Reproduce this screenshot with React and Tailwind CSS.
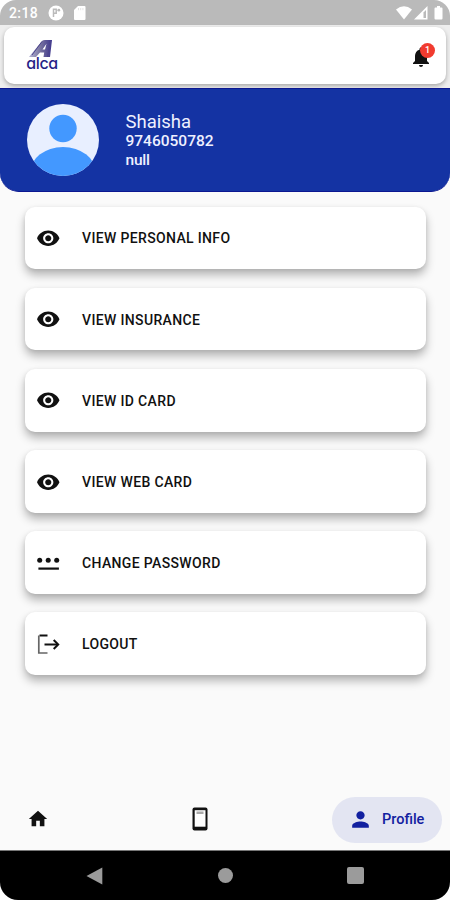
import { MdHome, MdNotifications, MdPerson, MdRemoveRedEye } from "react-icons/md";

function PasswordIcon() {
  return (
    <svg width="24" height="24" viewBox="0 0 24 24" fill="#111">
      <circle cx="2.700" cy="9.200" r="2.500" />
      <circle cx="11.200" cy="9.200" r="2.500" />
      <circle cx="19.700" cy="9.200" r="2.500" />
      <rect x="1.400" y="16.500" width="20.500" height="2.200" />
    </svg>
  );
}

function LogoutIcon() {
  return (
    <svg width="24" height="24" viewBox="0 0 24 24" fill="none" stroke="#111">
      <path d="M10.500 3.500H2.500" strokeWidth="2" />
      <path d="M1.800 3.500V21H10.500" strokeWidth="1.700" stroke="#666" />
      <path d="M7.500 12.500H20.500" strokeWidth="2" />
      <path d="M16.700 8L21.200 12.500L16.700 17" strokeWidth="2" />
    </svg>
  );
}

function Logo() {
  return (
    <div className="w-8 h-[31px] flex flex-col items-center">
      <svg width="26" height="18" viewBox="0 0 26 18" className="shrink-0">
        <defs>
          <linearGradient id="logoFill" x1="0" x2="1">
            <stop offset="0" stopColor="#b5b3d4" />
            <stop offset="0.5" stopColor="#77739f" />
            <stop offset="1" stopColor="#3d358d" />
          </linearGradient>
        </defs>
        <path
          fill="url(#logoFill)"
          fillRule="evenodd"
          d="M0 17L13 1Q14 0 16 0H23L21 17H14.500L15.200 12.500H11L7 17ZM13.500 9.500H16L17.500 3.800Z"
        />
        <path d="M21.500 1L18.500 17M13 1.500L3 15" stroke="#4c458d" strokeWidth="1" fill="none" />
      </svg>
      <span className="-mt-[3px] text-[16px] leading-[17px] font-medium text-[#261f87] font-['Inter',sans-serif] [font-feature-settings:'cv11'] tracking-[-0.4px]">
        alca
      </span>
    </div>
  );
}

function StatusBar() {
  return (
    <div className="h-[25px] shrink-0 bg-[#bababa] rounded-t-[16px] flex items-center justify-between pl-[9px] pr-[7px] text-white">
      <div className="flex items-center">
        <span className="w-[39px] text-[14px] leading-[25px] font-medium tracking-[0.4px] pt-px">2:18</span>
        <svg width="16" height="16" viewBox="0 0 16 16" className="mt-[1px]">
          <circle cx="8" cy="8" r="7.5" fill="#fff" />
          <path d="M5.500 12V4.200H8.200V8.200H5.500" fill="none" stroke="#bababa" strokeWidth="1.500" />
          <circle cx="10.800" cy="5.200" r="1.400" fill="#bababa" />
        </svg>
        <svg width="12" height="14" viewBox="0 0 12 14" className="ml-[10px] mt-[1px]" fill="#fff">
          <path d="M4 0H10.500Q11.500 0 11.500 1V13Q11.500 14 10.500 14H1Q0 14 0 13V4Z" />
          <path d="M4.500 2V4.200M6.700 2V4.200M8.900 2V4.200" stroke="#ddd" strokeWidth="0.800" />
        </svg>
      </div>
      <div className="flex items-center pt-px">
        <svg width="16" height="14" viewBox="0 0 16 14" fill="#fff">
          <path d="M0 3.600Q8-3.200 16 3.600L8 13.500Z" />
        </svg>
        <svg width="14" height="14" viewBox="0 0 14 14" className="ml-[2px]" fill="#fff">
          <path d="M0 13.500L13.500 0V13.500Z" />
          <path d="M9.500 6.500L12 4V12H9.500Z" fill="#bababa" />
        </svg>
        <svg width="9" height="14" viewBox="0 0 9 14" className="ml-[6px]" fill="#fff">
          <path d="M3 0H6V1.500H7.500Q8.500 1.500 8.500 2.500V12.500Q8.500 13.500 7.500 13.500H1.500Q0.500 13.500 0.500 12.500V2.500Q0.500 1.500 1.500 1.500H3Z" />
        </svg>
      </div>
    </div>
  );
}

function Header() {
  return (
    <div className="h-[63px] shrink-0 px-[4px] pt-[2px] pb-[4px] bg-[#eeeeee]">
      <div className="h-[57px] rounded-[10px] bg-white shadow-[0_2px_4px_rgba(0,0,0,0.3)] flex items-center justify-between pl-[22px] pr-[13px]">
        <Logo />
        <div className="relative w-[24px] h-[24px] mt-[2px]">
          <MdNotifications size={24} color="#111" />
          <span className="absolute -top-[2px] left-[11px] w-[15px] h-[15px] rounded-full bg-[#f13b2f] text-white text-[9px] leading-[15px] text-center font-medium">
            1
          </span>
        </div>
      </div>
    </div>
  );
}

function UserBanner() {
  return (
    <div className="h-[104px] shrink-0 bg-[#1433a3] border-y border-[#0b1690] rounded-b-[19px] flex items-center pl-[27px]">
      <svg width="72" height="72" viewBox="0 0 72 72">
        <defs>
          <clipPath id="avatarClip">
            <circle cx="36" cy="36" r="36" />
          </clipPath>
        </defs>
        <circle cx="36" cy="36" r="36" fill="#e8efff" />
        <circle cx="36" cy="24.500" r="13.700" fill="#4398ff" />
        <ellipse cx="36" cy="69" rx="33" ry="26" fill="#4398ff" clipPath="url(#avatarClip)" />
      </svg>
      <div className="ml-[26.500px] text-[#eef0ff]">
        <p className="text-[18.500px] leading-[20px]">Shaisha</p>
        <p className="text-[15.500px] leading-[19px] font-medium">9746050782</p>
        <p className="text-[15.500px] leading-[18px] font-medium tracking-[-0.2px]">null</p>
      </div>
    </div>
  );
}

const eye = <MdRemoveRedEye size={24.5} color="#111" className="-ml-px mt-px" />;

const menuItems = [
  { label: "VIEW PERSONAL INFO", icon: eye },
  { label: "VIEW INSURANCE", icon: eye },
  { label: "VIEW ID CARD", icon: eye },
  { label: "VIEW WEB CARD", icon: eye },
  { label: "CHANGE PASSWORD", icon: <PasswordIcon /> },
  { label: "LOGOUT", icon: <LogoutIcon /> },
];

function BottomNav() {
  return (
    <div className="h-[62px] shrink-0 flex items-center justify-between pl-[27px] pr-[8px]">
      <MdHome size={22} color="#111" />
      <svg width="16" height="24" viewBox="0 0 16 24" className="ml-[18px]">
        <rect x="0.500" y="0.500" width="15" height="23" rx="2" fill="#111" />
        <rect x="2.700" y="3.200" width="10.800" height="16.500" fill="#fff" />
        <rect x="4.500" y="4.500" width="7" height="2.500" fill="#aaa" />
      </svg>
      <div className="w-[110px] h-[46px] mt-px rounded-full bg-[#e3e5f2] flex items-center pl-[17px] text-[#1220a0]">
        <MdPerson size={25} className="-ml-[1px]" />
        <span className="ml-[9px] mt-px text-[14.500px] font-medium">Profile</span>
      </div>
    </div>
  );
}

function SystemNav() {
  return (
    <div className="h-[50px] shrink-0 bg-black border-t border-[#777] rounded-b-[18px] flex items-center justify-between pl-[86px] pr-[86px]">
      <svg width="17" height="18" viewBox="0 0 17 18" fill="#9b9b9b">
        <path d="M16.300 0.500V17.500L0.500 9Z" />
      </svg>
      <span className="w-[15px] h-[15px] rounded-full bg-[#9b9b9b]" />
      <span className="w-[17px] h-[17px] rounded-[2px] bg-[#9b9b9b]" />
    </div>
  );
}

export default function App() {
  return (
    <div className="w-[450px] h-[900px] bg-white overflow-hidden font-['Roboto',sans-serif]">
      <div className="h-full flex flex-col bg-[#fafafa] rounded-[18px]">
        <StatusBar />
        <Header />
        <UserBanner />
        <div className="flex-1 flex flex-col gap-[18.500px] pt-[14.500px] pl-[25px] pr-[24px]">
          {menuItems.map((item) => (
            <button
              key={item.label}
              className="h-[62.700px] shrink-0 w-full rounded-[10px] bg-white flex items-center pl-[12px] text-[#111] shadow-[0_6px_10px_rgba(0,0,0,0.28),0_1px_4px_rgba(0,0,0,0.08)]"
            >
              <span className="w-[45px] flex items-center">{item.icon}</span>
              <span className="pt-[1px] text-[14px] leading-[18px] font-medium tracking-[0.350px]">{item.label}</span>
            </button>
          ))}
        </div>
        <BottomNav />
        <SystemNav />
      </div>
    </div>
  );
}
